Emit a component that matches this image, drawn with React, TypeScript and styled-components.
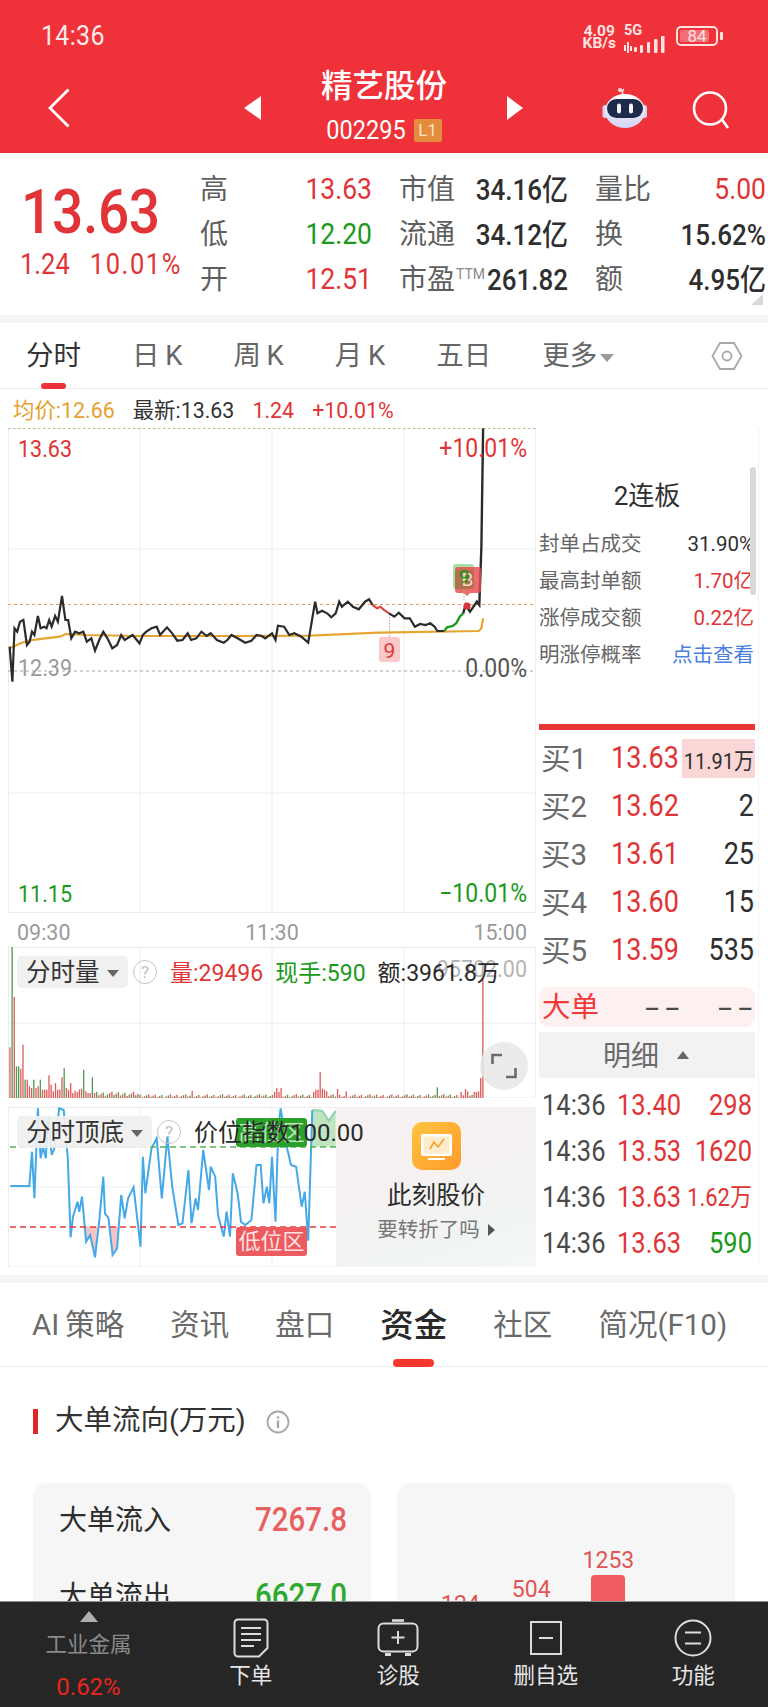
import React from "react";
import styled, { createGlobalStyle, css } from "styled-components";

const FONT = `Roboto, "Noto Sans CJK SC", sans-serif`;
const RED = "#e03436";
const GREEN = "#1b991b";
const DARK = "#2f2f2f";
const GREY = "#666666";

/* The quote font has tall, narrow numerals */
const tallDigits = css`
  display: inline-block;
  transform: scaleY(1.13);
`;

const Global = createGlobalStyle`
  html, body { margin: 0; padding: 0; background: #fff; }
  * { box-sizing: border-box; }
  body { font-family: ${FONT}; }
`;

const Page = styled.div`
  width: 768px;
  height: 1707px;
  overflow: hidden;
  display: flex;
  flex-direction: column;
  background: #fff;
  color: ${DARK};
  line-height: 1;
`;

/* ---------- red header ---------- */
const Header = styled.header`
  flex: none;
  height: 153px;
  background: #ef3239;
  color: #fff;
`;
const StatusBar = styled.div`
  height: 72px;
  display: flex;
  align-items: flex-start;
  padding: 23px 50px 0 41px;
`;
const Clock = styled.span`
  ${tallDigits}
  font-size: 25px;
  line-height: 26px;
  letter-spacing: 0.3px;
  margin-right: auto;
  color: #fdeaea;
`;
const NetSpeed = styled.div`
  display: flex;
  flex-direction: column;
  align-items: center;
  font-size: 15.5px;
  font-weight: 700;
  line-height: 12px;
  margin: 2px 8px 0 0;
  color: #fde2e2;
`;
const SignalBox = styled.div`
  display: flex;
  flex-direction: column;
  font-size: 14.5px;
  font-weight: 700;
  line-height: 11px;
  margin: 2px 10px 0 0;
  color: #fde2e2;
`;
const Battery = styled.div`
  position: relative;
  width: 42px;
  height: 20px;
  margin-top: 3px;
  border: 2px solid #fde2e2;
  border-radius: 5px;
  display: flex;
  align-items: center;
  justify-content: center;
  font-size: 17px;
  color: #fde2e2;
  &::before {
    content: "";
    position: absolute;
    left: 2px;
    top: 2px;
    bottom: 2px;
    width: 29px;
    background: rgba(255, 255, 255, 0.3);
    border-radius: 2px;
  }
  &::after {
    content: "";
    position: absolute;
    right: -7px;
    top: 4px;
    width: 3px;
    height: 8px;
    background: #fde2e2;
    border-radius: 1px;
  }
`;
const BatteryLevel = styled.span`
  position: relative;
`;
const NavBar = styled.div`
  height: 81px;
  display: grid;
  grid-template-columns: 244px 279px 1fr;
  align-items: start;
`;
const BackCell = styled.div`
  padding: 16px 0 0 47px;
  display: flex;
`;
const TitleCell = styled.div`
  display: flex;
  align-items: flex-start;
  justify-content: space-between;
`;
const Arrow = styled.span<{ $dir: "left" | "right" }>`
  width: 0;
  height: 0;
  margin-top: 24px;
  border-top: 12px solid transparent;
  border-bottom: 12px solid transparent;
  ${(p) =>
    p.$dir === "left"
      ? "border-right: 17px solid #fff;"
      : "border-left: 16px solid #fff;"}
`;
const TitleColumn = styled.div`
  display: flex;
  flex-direction: column;
  align-items: center;
  margin-top: -5px;
`;
const StockName = styled.div`
  font-size: 31.5px;
  line-height: 40px;
  font-weight: 500;
  color: #fff;
`;
const CodeRow = styled.div`
  display: flex;
  align-items: center;
  gap: 8px;
  margin-top: 12px;
  font-size: 23.5px;
  color: #fff;
`;
const CodeText = styled.span`
  ${tallDigits}
`;
const LevelBadge = styled.span`
  width: 28px;
  height: 23px;
  background: #e58c3c;
  border-radius: 2px;
  font-size: 17px;
  display: flex;
  align-items: center;
  justify-content: center;
  color: #fbe3c8;
`;
const ActionCell = styled.div`
  display: flex;
  align-items: flex-start;
  padding: 15px 0 0 79px;
  gap: 44px;
`;
const SearchSlot = styled.span`
  display: flex;
  margin-top: 4px;
`;

/* ---------- price summary ---------- */
const Quote = styled.section`
  flex: none;
  height: 162px;
  position: relative;
  display: flex;
  padding: 14px 0 0 20px;
`;
const PriceBlock = styled.div`
  width: 180px;
  flex: none;
  color: ${RED};
`;
const BigPrice = styled.div`
  font-size: 55px;
  font-weight: 500;
  height: 62px;
  line-height: 62px;
  margin: 14px 0 0 1px;
  letter-spacing: -0.3px;
  transform: scaleY(1.12);
`;
const PriceChange = styled.div`
  display: flex;
  gap: 20px;
  margin-top: 6px;
  font-size: 25.5px;
  line-height: 30px;
  white-space: nowrap;
`;
const PriceChangeValue = styled.span<{ $wide?: boolean }>`
  ${tallDigits}
  ${(p) => p.$wide && "letter-spacing: 1.6px;"}
`;
const StatGrid = styled.div`
  display: grid;
  grid-template-columns: 172px 169px 171px;
  column-gap: 27px;
  grid-auto-rows: 45px;
  height: 135px;
`;
const StatCell = styled.div`
  display: flex;
  align-items: center;
  justify-content: space-between;
  white-space: nowrap;
`;
const StatLabel = styled.span`
  font-size: 28px;
  color: #5f5f5f;
`;
const StatValue = styled.span<{ $color?: string }>`
  ${tallDigits}
  font-size: ${(p) => (p.$color ? 26.5 : 26)}px;
  font-weight: ${(p) => (p.$color ? 400 : 500)};
  color: ${(p) => p.$color ?? DARK};
`;
const Ttm = styled.sup`
  font-size: 14px;
  color: #8a8a8a;
  vertical-align: 10px;
  line-height: 0;
  margin-left: 1px;
`;
const CornerMark = styled.span`
  position: absolute;
  right: 5px;
  bottom: 10px;
  width: 0;
  height: 0;
  border-left: 12px solid transparent;
  border-bottom: 11px solid #d8d8d8;
`;
const Band = styled.div`
  flex: none;
  height: 8px;
  background: #f4f4f4;
`;

/* ---------- chart period tabs ---------- */
const PeriodTabs = styled.nav`
  flex: none;
  height: 66px;
  display: flex;
  align-items: center;
  gap: 51px;
  padding: 0 25px 0 26px;
  border-bottom: 1px solid #ececec;
  font-size: 27.5px;
  color: ${GREY};
`;
const PeriodTab = styled.span<{ $active?: boolean }>`
  position: relative;
  white-space: nowrap;
  color: ${(p) => (p.$active ? "#333" : GREY)};
  ${(p) =>
    p.$active &&
    `&::after {
      content: "";
      position: absolute;
      left: 15px;
      bottom: -20px;
      width: 25px;
      height: 6px;
      border-radius: 3px;
      background: #ef3239;
    }`}
`;
const Caret = styled.span<{ $color?: string; $size?: number }>`
  display: inline-block;
  width: 0;
  height: 0;
  margin-left: 3px;
  vertical-align: 3px;
  border-left: ${(p) => p.$size ?? 7}px solid transparent;
  border-right: ${(p) => p.$size ?? 7}px solid transparent;
  border-top: ${(p) => (p.$size ?? 7) + 1}px solid ${(p) => p.$color ?? "#9a9a9a"};
`;
const HexSlot = styled.span`
  margin-left: auto;
  display: flex;
`;
const Legend = styled.div`
  flex: none;
  height: 39px;
  display: flex;
  align-items: center;
  gap: 18px;
  padding: 4px 0 0 13px;
  font-size: 21.4px;
  white-space: nowrap;
`;
const LegendItem = styled.span<{ $color: string }>`
  color: ${(p) => p.$color};
`;

/* ---------- chart + order book ---------- */
const Market = styled.section`
  flex: none;
  height: 847px;
  display: flex;
`;
const ChartColumn = styled.div`
  width: 536px;
  flex: none;
  padding-left: 8px;
  display: flex;
  flex-direction: column;
`;
const ChartPanel = styled.div<{ $h: number; $gap?: number }>`
  position: relative;
  height: ${(p) => p.$h}px;
  margin-top: ${(p) => p.$gap ?? 0}px;
  flex: none;
  & > svg {
    display: block;
  }
`;
const ChartLabel = styled.span<{
  $color: string;
  $left?: number;
  $right?: number;
  $top: number;
  $pct?: boolean;
}>`
  ${tallDigits}
  position: absolute;
  top: ${(p) => p.$top}px;
  ${(p) => (p.$left !== undefined ? `left: ${p.$left}px;` : "")}
  ${(p) => (p.$right !== undefined ? `right: ${p.$right}px;` : "")}
  font-size: ${(p) => (p.$pct ? 23 : 21.5)}px;
  line-height: 24px;
  color: ${(p) => p.$color};
  white-space: nowrap;
`;
const TimeAxis = styled.div`
  flex: none;
  height: 34px;
  display: flex;
  justify-content: space-between;
  align-items: center;
  padding: 5px 9px 0 9px;
  font-size: 21.5px;
  color: #9a9a9a;
`;
const Overlay = styled.div`
  position: absolute;
  left: 9px;
  top: 9px;
  display: flex;
  align-items: center;
  white-space: nowrap;
`;
const IndicatorChip = styled.span<{ $w: number }>`
  width: ${(p) => p.$w}px;
  height: 32px;
  border-radius: 5px;
  background: rgba(240, 240, 240, 0.92);
  display: flex;
  align-items: center;
  justify-content: space-between;
  padding: 2px 9px 0;
  font-size: 24.5px;
  color: #333;
`;
const HelpDot = styled.span`
  width: 24px;
  height: 24px;
  flex: none;
  margin: 0 5px;
  border: 1.5px solid #c4c4c4;
  border-radius: 50%;
  color: #c0c0c0;
  font-size: 17px;
  display: flex;
  align-items: center;
  justify-content: center;
`;
const ReadoutRow = styled.span`
  display: flex;
  gap: 12px;
  margin-left: 8px;
  padding-top: 2px;
  font-size: 23px;
`;
const Readout = styled.span<{ $color: string }>`
  color: ${(p) => p.$color};
`;
const IndexReadout = styled.span`
  margin-left: 8px;
  padding-top: 2px;
  font-size: 24px;
  color: #2a2a2a;
`;
const ExpandButton = styled.span`
  position: absolute;
  left: 472px;
  top: 95px;
  width: 48px;
  height: 48px;
  border-radius: 50%;
  background: rgba(232, 232, 232, 0.85);
  display: flex;
  align-items: center;
  justify-content: center;
`;
const ZoneBadge = styled.span<{ $bg: string; $top: number; $color: string }>`
  position: absolute;
  left: 228px;
  top: ${(p) => p.$top}px;
  width: 71px;
  height: 29px;
  border-radius: 3px;
  background: ${(p) => p.$bg};
  color: ${(p) => p.$color};
  font-size: 22px;
  display: flex;
  align-items: center;
  justify-content: center;
`;
const Promo = styled.aside`
  position: absolute;
  left: 328px;
  right: 0;
  top: 0;
  bottom: 0;
  background: linear-gradient(160deg, #f7f2f2 0%, #f6f1f1 40%, #f0f4f3 75%, #f6f8f8 100%);
  display: flex;
  flex-direction: column;
  align-items: center;
  padding-top: 15px;
`;
const PromoTitle = styled.div`
  margin-top: 11px;
  font-size: 24.5px;
  line-height: 30px;
  color: #2c2c2c;
`;
const PromoSub = styled.div`
  margin-top: 5px;
  font-size: 20.5px;
  line-height: 28px;
  color: #777;
  display: flex;
  align-items: center;
  gap: 8px;
`;
const PlayMark = styled.span`
  width: 0;
  height: 0;
  border-top: 6px solid transparent;
  border-bottom: 6px solid transparent;
  border-left: 7px solid #555;
`;
const SideColumn = styled.div`
  flex: none;
  width: 222px;
  padding: 0 3px;
  margin-right: 10px;
  box-shadow: 1px 0 0 #f3f3f3;
  height: 839px;
`;
const LimitBox = styled.div`
  position: relative;
  height: 296px;
  padding-top: 48px;
`;
const LimitTitle = styled.div`
  height: 40px;
  margin-bottom: 10px;
  display: flex;
  align-items: center;
  justify-content: center;
  font-size: 26px;
`;
const LimitRow = styled.div`
  height: 37px;
  display: flex;
  align-items: center;
  justify-content: space-between;
  padding: 0 1px 0 0;
  white-space: nowrap;
`;
const LimitLabel = styled.span`
  font-size: 20.5px;
  color: ${GREY};
`;
const LimitValue = styled.span<{ $color: string }>`
  font-size: 20.5px;
  color: ${(p) => p.$color};
`;
const ScrollThumb = styled.span`
  position: absolute;
  right: -1px;
  top: 39px;
  width: 6px;
  height: 128px;
  border-radius: 3px;
  background: #d9d9d9;
`;
const RedRule = styled.div`
  height: 6px;
  background: #e83535;
`;
const Book = styled.div`
  margin-top: 4px;
`;
const BookRow = styled.div`
  height: 48px;
  display: grid;
  grid-template-columns: 70px 71px 1fr;
  align-items: center;
  padding-left: 2px;
`;
const BookLabel = styled.span`
  font-size: 29.5px;
  padding-top: 3px;
  color: #6a6a6a;
  white-space: nowrap;
`;
const BookPrice = styled.span`
  ${tallDigits}
  font-size: 27px;
  color: ${RED};
`;
const BookVolume = styled.span<{ $hl?: boolean }>`
  text-align: right;
  font-size: ${(p) => (p.$hl ? 20 : 27)}px;
  color: ${DARK};
  padding-right: 1px;
  white-space: nowrap;
  ${(p) => p.$hl && `background:#fad6d6; height:39px; line-height:44px;`}
`;
const VolumeText = styled.span`
  ${tallDigits}
`;
const BigOrder = styled.div`
  height: 40px;
  margin-top: 13px;
  border-radius: 9px;
  background: #fdf0f1;
  display: grid;
  grid-template-columns: 101px 37px 1fr;
  align-items: center;
  padding: 3px 2px 0 3px;
  color: #ef3a3a;
  font-size: 28.5px;
`;
const Dash = styled.span`
  font-size: 24px;
  font-weight: 500;
  color: #4a4a4a;
  text-align: right;
  letter-spacing: 5px;
  margin-right: -5px;
  white-space: nowrap;
`;
const DetailHead = styled.div`
  height: 46px;
  margin-top: 5px;
  background: #f2f2f2;
  display: flex;
  align-items: center;
  padding: 3px 0 0 64px;
  gap: 18px;
  font-size: 28px;
  color: #6a6a6a;
`;
const UpCaret = styled.span`
  width: 0;
  height: 0;
  margin-top: -3px;
  border-left: 6px solid transparent;
  border-right: 6px solid transparent;
  border-bottom: 8px solid #666;
`;
const Ticks = styled.div`
  margin-top: 3px;
`;
const TickRow = styled.div`
  height: 46px;
  display: grid;
  grid-template-columns: 75px 65px 1fr;
  align-items: center;
  padding: 3px 3px 0 3px;
  font-size: 25.5px;
`;
const TickTime = styled.span`
  ${tallDigits}
  color: #4a4a4a;
`;
const TickPrice = styled.span`
  ${tallDigits}
  color: ${RED};
`;
const TickVolume = styled.span<{ $color: string; $small?: boolean }>`
  text-align: right;
  white-space: nowrap;
  color: ${(p) => p.$color};
  font-size: ${(p) => (p.$small ? 22 : 25.5)}px;
`;

/* ---------- lower content ---------- */
const Lower = styled.section`
  flex: 1;
  min-height: 0;
  overflow: hidden;
`;
const SectionTabs = styled.nav`
  height: 84px;
  display: flex;
  align-items: center;
  gap: 46px;
  padding: 3px 0 0 32px;
  border-bottom: 1.5px solid #ececec;
  font-size: 29.5px;
  color: #6a6a6a;
  white-space: nowrap;
`;
const SectionTab = styled.span<{ $active?: boolean }>`
  position: relative;
  ${(p) =>
    p.$active &&
    `font-size: 33.5px;
     font-weight: 500;
     color: #2a2a2a;
     &::after {
       content: "";
       position: absolute;
       left: 13px;
       bottom: -24px;
       width: 41px;
       height: 8px;
       border-radius: 4px;
       background: #f5372e;
     }`}
`;
const SectionHead = styled.div`
  display: flex;
  align-items: center;
  height: 25px;
  margin: 42px 0 49px 33px;
`;
const HeadMark = styled.span`
  width: 5px;
  height: 25px;
  background: #e1252b;
  margin-right: 17px;
`;
const HeadTitle = styled.span`
  font-size: 28.5px;
  color: #333;
  margin-right: 20px;
  white-space: nowrap;
`;
const Cards = styled.div`
  display: grid;
  grid-template-columns: 338px 338px;
  column-gap: 26px;
  padding-left: 33px;
`;
const Card = styled.div`
  height: 260px;
  border-radius: 14px;
  background: #f6f6f6;
  padding: 20px 24px 0 26px;
`;
const FlowRow = styled.div`
  height: 36px;
  margin-bottom: 40px;
  display: flex;
  justify-content: space-between;
  align-items: center;
`;
const FlowLabel = styled.span`
  font-size: 28px;
  color: #2c2c2c;
`;
const FlowValue = styled.span<{ $color: string }>`
  ${tallDigits}
  font-size: 29.5px;
  font-weight: 500;
  color: ${(p) => p.$color};
`;
const BarCard = styled(Card)`
  padding: 66px 0 0 44px;
  display: flex;
  align-items: flex-start;
  gap: 32px;
`;
const BarColumn = styled.div<{ $offset: number }>`
  margin-top: ${(p) => p.$offset}px;
  display: flex;
  flex-direction: column;
  align-items: center;
  gap: 3px;
  font-size: 23px;
  color: #e25555;
`;
const BarFill = styled.span`
  width: 34px;
  height: 60px;
  border-radius: 4px 4px 0 0;
  background: #ee5c5f;
`;

/* ---------- bottom toolbar ---------- */
const Toolbar = styled.footer`
  flex: none;
  height: 106px;
  background: #262626;
  display: grid;
  grid-template-columns: 177px repeat(4, 147.5px);
  border-top: 1px solid #8e8e8e;
`;
const SectorCell = styled.div`
  display: flex;
  flex-direction: column;
  align-items: center;
  padding-top: 9px;
`;
const SectorCaret = styled.span`
  width: 0;
  height: 0;
  border-left: 9px solid transparent;
  border-right: 9px solid transparent;
  border-bottom: 11px solid #b0b0b0;
`;
const SectorName = styled.span`
  margin-top: 10px;
  font-size: 21.5px;
  line-height: 26px;
  color: #8a8a8a;
`;
const SectorChange = styled.span`
  margin-top: 16px;
  font-size: 24px;
  line-height: 26px;
  color: #e8261d;
`;
const ToolItem = styled.div`
  display: flex;
  flex-direction: column;
  align-items: center;
  padding-top: 16px;
  color: #e6e6e6;
`;
const ToolIcon = styled.span`
  height: 40px;
  display: flex;
  align-items: center;
`;
const ToolLabel = styled.span`
  margin-top: 5px;
  font-size: 21.5px;
  line-height: 26px;
`;

/* ---------- chart data, in a 2.9 x 3 plotting grid ---------- */
const PRICE_A = "28,950 36,1055 42,895 50,905 58,875 68,870 78,945 86,935 93,905 100,915 110,858 118,895 128,890 135,895 143,870 150,890 160,858 168,875 180,798 190,870 198,870 207,925 218,905 230,910 242,905 252,935 265,925 276,962 288,930 300,905 312,925 326,955 340,945 352,915 362,930 385,915 405,940 415,915 425,905 440,895 455,890 465,915 485,892 500,910 515,932 530,930 545,910 555,930 570,925 585,905 600,918 612,910 630,930 650,938 660,930 672,915 690,925 712,938 730,932 745,915 760,918 770,925 790,910 800,930 807,887 825,890 840,915 855,910 875,920 895,938 915,815 922,850 935,842 950,850 962,862 975,850 985,815 993,830 1010,815 1025,830 1042,838 1060,815 1072,808 1082,825";
const PRICE_B = "1082,825 1095,835 1105,830 1115,840 1130,850";
const PRICE_C = "1130,850 1145,860 1158,848 1175,865 1190,865 1205,890 1220,882 1235,885 1250,880 1262,890 1270,903 1290,903";
const PRICE_D = "1290,903 1298,892 1315,888 1325,880 1335,860 1345,850";
const PRICE_E = "1345,850 1352,825 1365,845 1385,815 1392,825 1398,650 1403,295";
const AVERAGE = "28,955 60,940 80,932 130,925 175,920 190,912 250,915 400,918 700,918 900,917 1100,908 1390,903 1398,895 1403,865";
const TREND = "30,858 85,858 93,755 100,895 110,625 118,775 125,740 133,775 140,650 150,765 158,745 172,625 185,630 197,775 205,1012 212,950 225,905 230,935 238,890 250,1025 262,1005 276,1072 288,965 300,830 305,940 315,955 327,1065 340,1045 352,885 362,955 372,895 388,862 408,1040 415,770 422,880 440,745 455,715 470,895 486,710 500,860 518,975 530,970 547,810 556,970 568,895 575,930 590,750 607,870 612,800 625,830 633,945 650,1010 658,935 668,1010 676,820 690,880 700,965 712,975 730,960 745,795 757,795 765,910 775,860 782,910 790,770 800,965 808,690 815,625 835,750 845,795 860,800 876,920 885,875 895,1022 907,630";
const TREND_HIGH = "907,630 935,632 955,662 975,632";

const plot = (pts: string, originY: number) =>
  pts
    .split(" ")
    .map((p) => {
      const [x, y] = p.split(",").map(Number);
      return `${(x / 2.904).toFixed(1)},${(originY + y / 3).toFixed(1)}`;
    })
    .join(" ");

const VOLUME_PEAKS: Record<number, number> = {
  0: 152, 1: 453, 2: 303, 3: 95, 4: 95, 5: 88, 6: 160, 7: 55, 8: 55, 9: 35, 10: 30, 11: 55, 12: 30,
  13: 35, 14: 55, 15: 25, 16: 25, 17: 25, 18: 68, 19: 40, 20: 20, 21: 45, 22: 25, 23: 25, 24: 62,
  25: 90, 26: 30, 27: 25, 28: 45, 29: 15, 30: 22, 31: 18, 32: 25, 33: 28, 34: 85, 35: 20, 36: 15,
  37: 15, 38: 62, 39: 15, 84: 22, 122: 18, 123: 30, 124: 18, 125: 30, 140: 18, 141: 25, 142: 25,
  143: 78, 144: 28, 145: 25, 146: 20, 151: 27, 155: 20, 197: 32, 208: 18, 210: 27, 211: 20,
  214: 18, 215: 18, 216: 20, 217: 60, 218: 360,
};
const GREEN_PEAKS = [1, 3, 4, 7, 11, 14, 25, 34, 38, 197];

const volumeBars = Array.from({ length: 219 }, (_, i) => {
  const noise = ((i * 73 + 19) % 17) / 17;
  const h = VOLUME_PEAKS[i] ?? (i < 60 ? 6 + noise * 14 : 2 + noise * 10);
  const green = GREEN_PEAKS.includes(i) || (!VOLUME_PEAKS[i] && (i * 7 + 3) % 5 >= 3);
  return { x: (27 + i * 6.3) / 2.904, h: h / 3, color: green ? "#4f9a4f" : "#de5a5a" };
});

const GRID = "#ececec";
const VERTICALS = [140, 272, 404];

const VerticalGrid: React.FC<{ y1: number; y2: number }> = ({ y1, y2 }) => (
  <>
    {VERTICALS.map((x) => (
      <line key={x} x1={x} x2={x} y1={y1} y2={y2} stroke={GRID} strokeWidth={1} />
    ))}
    <line x1={8.5} x2={8.5} y1={y1} y2={y2} stroke={GRID} />
    <line x1={535.5} x2={535.5} y1={y1} y2={y2} stroke={GRID} />
  </>
);

const PriceChart = () => (
  <svg width={528} height={485} viewBox="8 428 528 485">
    <VerticalGrid y1={428} y2={913} />
    <line x1={8} x2={536} y1={549} y2={549} stroke={GRID} />
    <line x1={8} x2={536} y1={793} y2={793} stroke={GRID} />
    <line x1={8} x2={536} y1={912.5} y2={912.5} stroke={GRID} />
    <line x1={8} x2={536} y1={428.5} y2={428.5} stroke="#b9b98c" strokeDasharray="2.5 2.5" />
    <line x1={8} x2={536} y1={604.5} y2={604.5} stroke="#ee9a55" strokeDasharray="3 3" />
    <line x1={8} x2={536} y1={671} y2={671} stroke="#a8a8a8" strokeDasharray="3 3" strokeWidth={1.2} />
    <polyline points={plot(AVERAGE, 330)} fill="none" stroke="#e6a531" strokeWidth={2.2} />
    <line x1={389.5} x2={389.5} y1={614} y2={640} stroke="#e58a8a" strokeDasharray="1.5 1.5" />
    <polyline points={plot(PRICE_A, 330)} fill="none" stroke="#2b2b2b" strokeWidth={2.2} />
    <polyline points={plot(PRICE_B, 330)} fill="none" stroke="#d9453f" strokeWidth={2.2} />
    <polyline points={plot(PRICE_C, 330)} fill="none" stroke="#2b2b2b" strokeWidth={2.2} />
    <polyline points={plot(PRICE_D, 330)} fill="none" stroke="#1d9a1d" strokeWidth={2.4} />
    <polyline points={plot(PRICE_E, 330)} fill="none" stroke="#2b2b2b" strokeWidth={2.4} />
    <path d="M379 640a3 3 0 0 1 3-3h6l1.5-1.5 1.5 1.5h6a3 3 0 0 1 3 3v19a3 3 0 0 1-3 3h-15a3 3 0 0 1-3-3z" fill="#f9c8c9" />
    <text x={389.5} y={658} textAnchor="middle" fontSize={21} fill="#e03a3a" fontFamily="Roboto">9</text>
    <rect x={453} y={564} width={21} height={25} rx={3} fill="#a6dea6" />
    <path d="M455 570a3 3 0 0 1 3-3h20a3 3 0 0 1 3 3v20a3 3 0 0 1-3 3h-8l-3 3-3-3h-6a3 3 0 0 1-3-3z" fill="#e64b4e" fillOpacity={0.82} />
    <path d="M455 570h19v16a3 3 0 0 1-3 3h-16z" fill="#8a7a3c" fillOpacity={0.55} />
    <line x1={464} x2={464} y1={590} y2={600} stroke="#7cc47c" strokeDasharray="1.5 1.5" />
    <text x={467.5} y={586} textAnchor="middle" fontSize={19} fill="#f6d9c4" fontFamily="Roboto">B</text>
    <text x={464} y={583} textAnchor="middle" fontSize={19} fill="#159a15" fontFamily="Roboto">9</text>
    <circle cx={467} cy={606} r={3.6} fill="#d8323a" />
  </svg>
);

const VolumeChart = () => (
  <svg width={528} height={151} viewBox="8 947 528 151">
    <VerticalGrid y1={947} y2={1098} />
    <line x1={8} x2={536} y1={947.5} y2={947.5} stroke={GRID} />
    <line x1={8} x2={536} y1={1023} y2={1023} stroke={GRID} />
    <line x1={8} x2={536} y1={1098} y2={1098} stroke={GRID} />
    {volumeBars.map((b, i) => (
      <rect key={i} x={b.x} y={1098 - b.h} width={1.3} height={b.h} fill={b.color} />
    ))}
  </svg>
);

const TrendChart = () => (
  <svg width={528} height={160} viewBox="8 1107 528 160">
    <VerticalGrid y1={1107} y2={1267} />
    <line x1={8} x2={536} y1={1107.5} y2={1107.5} stroke={GRID} />
    <line x1={8} x2={536} y1={1187} y2={1187} stroke={GRID} />
    <line x1={8} x2={536} y1={1267} y2={1267} stroke={GRID} />
    <polygon points={plot("245,980 250,1025 262,1005 276,1072 288,965 290,980", 900)} fill="#f7c4c6" />
    <polygon points={plot("320,980 327,1065 340,1045 345,980", 900)} fill="#f7c4c6" />
    <polygon points={plot("903,740 907,630 935,632 955,662 975,632 975,740", 900)} fill="#bfe6c0" />
    <polyline points={plot(TREND, 900)} fill="none" stroke="#45a9e8" strokeWidth={2} />
    <polyline points={plot(TREND_HIGH, 900)} fill="none" stroke="#8fd0a8" strokeWidth={2} />
    <line x1={10} x2={336} y1={1147} y2={1147} stroke="#58b058" strokeWidth={1.3} strokeDasharray="6 4" />
    <line x1={10} x2={336} y1={1227} y2={1227} stroke="#e8383c" strokeWidth={1.3} strokeDasharray="6 4" />
  </svg>
);

/* ---------- icons ---------- */
const RobotIcon = () => (
  <svg width={46} height={42} viewBox="0 0 46 42">
    <defs>
      <linearGradient id="helmet" x1="0" y1="0" x2="0" y2="1">
        <stop offset="0" stopColor="#ffffff" />
        <stop offset="1" stopColor="#d3d2f5" />
      </linearGradient>
    </defs>
    <path d="M21 8c-1-3-1-5 1-5.5" fill="none" stroke="#f6e6e6" strokeWidth={1.6} />
    <circle cx={18} cy={3} r={2} fill="#f6e6e6" />
    <rect x={0.5} y={18} width={5} height={13} rx={2.5} fill="#d6d3f2" />
    <rect x={40} y={18} width={5} height={13} rx={2.5} fill="#d6d3f2" />
    <ellipse cx={23} cy={24} rx={20} ry={17} fill="url(#helmet)" />
    <rect x={5} y={12} width={36} height={19} rx={9.5} fill="#1e2b4a" />
    <rect x={15} y={16.5} width={4} height={10} rx={2} fill="#f4f4fa" />
    <rect x={27} y={16.5} width={4} height={10} rx={2} fill="#f4f4fa" />
  </svg>
);
const BackIcon = () => (
  <svg width={24} height={40} viewBox="0 0 24 40">
    <path d="M21.5 1.5 3 20l18.5 18.5" fill="none" stroke="#fff" strokeWidth={2.8} />
  </svg>
);
const SearchIcon = () => (
  <svg width={38} height={38} viewBox="0 0 38 38">
    <circle cx={18} cy={17.5} r={16} fill="none" stroke="#fff" strokeWidth={2.6} />
    <path d="M30 28.5 36 37" stroke="#fff" strokeWidth={2.6} />
  </svg>
);
const SignalIcon = () => (
  <svg width={42} height={18} viewBox="0 0 42 18" fill="#fde2e2">
    <rect x={0} y={9} width={2} height={6} />
    <rect x={3} y={6} width={2} height={11} />
    <rect x={6} y={10} width={2} height={5} />
    <rect x={10} y={11} width={3} height={5} rx={1} />
    <rect x={16} y={9} width={3} height={8} rx={1} />
    <rect x={23} y={6} width={3} height={11} rx={1} />
    <rect x={30} y={3} width={3.5} height={14} rx={1} />
    <rect x={37} y={-2} width={3.5} height={19} rx={1} />
  </svg>
);
const HexIcon = () => (
  <svg width={32} height={30} viewBox="0 0 32 30" fill="none" stroke="#a8a8a8" strokeWidth={1.8}>
    <path d="M9 2h14l7.5 13L23 28H9L1.5 15z" />
    <circle cx={16} cy={15} r={4.5} />
  </svg>
);
const ExpandIcon = () => (
  <svg width={26} height={26} viewBox="0 0 26 26" fill="none" stroke="#6b6b6b" strokeWidth={2.6}>
    <path d="M1.5 11V2H11M24.5 15v9H15" />
  </svg>
);
const InfoIcon = () => (
  <svg width={24} height={24} viewBox="0 0 24 24" fill="none" stroke="#a6a6a6" strokeWidth={1.8}>
    <circle cx={12} cy={12} r={10.5} />
    <path d="M12 10.5V18M12 6.2v2.2" strokeWidth={2.4} />
  </svg>
);
const PromoIcon = () => (
  <svg width={49} height={48} viewBox="0 0 49 48">
    <defs>
      <linearGradient id="promoBg" x1="0" y1="0" x2="1" y2="1">
        <stop offset="0" stopColor="#ffc53f" />
        <stop offset="1" stopColor="#ff9a2a" />
      </linearGradient>
    </defs>
    <rect width={49} height={48} rx={10} fill="url(#promoBg)" />
    <rect x={9} y={12} width={31} height={22} rx={2} fill="#fff" />
    <rect x={11.5} y={14.5} width={26} height={17} fill="#fdeccb" />
    <path d="M18 27l4-7 4 5 6-8" fill="none" stroke="#f5a12c" strokeWidth={1.6} />
    <path d="M16 37h17" stroke="#fff" strokeWidth={2} />
  </svg>
);
const OrderIcon = () => (
  <svg width={36} height={40} viewBox="0 0 36 40" fill="none" stroke="#dcdcdc" strokeWidth={2}>
    <path d="M5 1.5h26a3.5 3.5 0 0 1 3.5 3.5v25L26 38.5H5A3.5 3.5 0 0 1 1.5 35V5A3.5 3.5 0 0 1 5 1.5z" />
    <path d="M8 10h20M8 16h20M8 22h20M8 28h13" />
  </svg>
);
const DiagnoseIcon = () => (
  <svg width={42} height={38} viewBox="0 0 42 38" fill="none" stroke="#dcdcdc" strokeWidth={2}>
    <path d="M15 1.5h12" strokeWidth={2.6} />
    <rect x={1.5} y={4.5} width={39} height={28} rx={5} />
    <path d="M8 35.5h6M28 35.5h6" strokeWidth={3} />
    <path d="M21 12v13M14.5 18.5h13" />
  </svg>
);
const RemoveIcon = () => (
  <svg width={32} height={34} viewBox="0 0 32 34" fill="none" stroke="#dcdcdc" strokeWidth={2}>
    <rect x={1} y={1} width={30} height={32} />
    <path d="M9 17h14" />
  </svg>
);
const MenuIcon = () => (
  <svg width={38} height={38} viewBox="0 0 38 38" fill="none" stroke="#dcdcdc" strokeWidth={2}>
    <circle cx={19} cy={19} r={17.5} />
    <path d="M11 13.5h16M11 24.5h16" />
  </svg>
);

const BOOK = [
  { label: "买1", price: "13.63", volume: "11.91万", hl: true },
  { label: "买2", price: "13.62", volume: "2" },
  { label: "买3", price: "13.61", volume: "25" },
  { label: "买4", price: "13.60", volume: "15" },
  { label: "买5", price: "13.59", volume: "535" },
];
const TICKS = [
  { price: "13.40", volume: "298", color: RED },
  { price: "13.53", volume: "1620", color: RED },
  { price: "13.63", volume: "1.62万", color: RED, small: true },
  { price: "13.63", volume: "590", color: GREEN },
];

export default function App() {
  return (
    <Page>
      <Global />
      <Header>
        <StatusBar>
          <Clock>14:36</Clock>
          <NetSpeed>
            <span>4.09</span>
            <span>KB/s</span>
          </NetSpeed>
          <SignalBox>
            <span>5G</span>
            <SignalIcon />
          </SignalBox>
          <Battery>
            <BatteryLevel>84</BatteryLevel>
          </Battery>
        </StatusBar>
        <NavBar>
          <BackCell>
            <BackIcon />
          </BackCell>
          <TitleCell>
            <Arrow $dir="left" />
            <TitleColumn>
              <StockName>精艺股份</StockName>
              <CodeRow>
                <CodeText>002295</CodeText>
                <LevelBadge>L1</LevelBadge>
              </CodeRow>
            </TitleColumn>
            <Arrow $dir="right" />
          </TitleCell>
          <ActionCell>
            <RobotIcon />
            <SearchSlot><SearchIcon /></SearchSlot>
          </ActionCell>
        </NavBar>
      </Header>

      <Quote>
        <PriceBlock>
          <BigPrice>13.63</BigPrice>
          <PriceChange>
            <PriceChangeValue>1.24</PriceChangeValue>
            <PriceChangeValue $wide>10.01%</PriceChangeValue>
          </PriceChange>
        </PriceBlock>
        <StatGrid>
          <StatCell><StatLabel>高</StatLabel><StatValue $color={RED}>13.63</StatValue></StatCell>
          <StatCell><StatLabel>市值</StatLabel><StatValue>34.16亿</StatValue></StatCell>
          <StatCell><StatLabel>量比</StatLabel><StatValue $color={RED}>5.00</StatValue></StatCell>
          <StatCell><StatLabel>低</StatLabel><StatValue $color={GREEN}>12.20</StatValue></StatCell>
          <StatCell><StatLabel>流通</StatLabel><StatValue>34.12亿</StatValue></StatCell>
          <StatCell><StatLabel>换</StatLabel><StatValue>15.62%</StatValue></StatCell>
          <StatCell><StatLabel>开</StatLabel><StatValue $color={RED}>12.51</StatValue></StatCell>
          <StatCell><StatLabel>市盈<Ttm>TTM</Ttm></StatLabel><StatValue>261.82</StatValue></StatCell>
          <StatCell><StatLabel>额</StatLabel><StatValue>4.95亿</StatValue></StatCell>
        </StatGrid>
        <CornerMark />
      </Quote>
      <Band />

      <PeriodTabs>
        <PeriodTab $active>分时</PeriodTab>
        <PeriodTab>日{"\u2009"}K</PeriodTab>
        <PeriodTab>周{"\u2009"}K</PeriodTab>
        <PeriodTab>月{"\u2009"}K</PeriodTab>
        <PeriodTab>五日</PeriodTab>
        <PeriodTab>更多<Caret /></PeriodTab>
        <HexSlot><HexIcon /></HexSlot>
      </PeriodTabs>
      <Legend>
        <LegendItem $color="#e5a02e">均价:12.66</LegendItem>
        <LegendItem $color="#333">最新:13.63</LegendItem>
        <LegendItem $color={RED}>1.24</LegendItem>
        <LegendItem $color={RED}>+10.01%</LegendItem>
      </Legend>

      <Market>
        <ChartColumn>
          <ChartPanel $h={485}>
            <PriceChart />
            <ChartLabel $color={RED} $left={10} $top={9}>13.63</ChartLabel>
            <ChartLabel $color={RED} $right={9} $top={9} $pct>+10.01%</ChartLabel>
            <ChartLabel $color="#9a9a9a" $left={10} $top={228}>12.39</ChartLabel>
            <ChartLabel $color="#555" $right={9} $top={229} $pct>0.00%</ChartLabel>
            <ChartLabel $color={GREEN} $left={10} $top={454}>11.15</ChartLabel>
            <ChartLabel $color={GREEN} $right={9} $top={454} $pct>−10.01%</ChartLabel>
          </ChartPanel>
          <TimeAxis>
            <span>09:30</span>
            <span>11:30</span>
            <span>15:00</span>
          </TimeAxis>
          <ChartPanel $h={151}>
            <VolumeChart />
            <ChartLabel $color="#b4b4b4" $right={9} $top={10}>95702.00</ChartLabel>
            <Overlay>
              <IndicatorChip $w={111}>分时量<Caret $color="#666" $size={6} /></IndicatorChip>
              <HelpDot>?</HelpDot>
              <ReadoutRow>
                <Readout $color={RED}>量:29496</Readout>
                <Readout $color={GREEN}>现手:590</Readout>
                <Readout $color="#2a2a2a">额:3961.8万</Readout>
              </ReadoutRow>
            </Overlay>
            <ExpandButton><ExpandIcon /></ExpandButton>
          </ChartPanel>
          <ChartPanel $h={160} $gap={9}>
            <TrendChart />
            <ZoneBadge $bg="#2ba02b" $color="#bfe6bf" $top={11}>高位区</ZoneBadge>
            <ZoneBadge $bg="#ec5b5f" $color="#fde3e3" $top={120}>低位区</ZoneBadge>
            <Promo>
              <PromoIcon />
              <PromoTitle>此刻股价</PromoTitle>
              <PromoSub>要转折了吗<PlayMark /></PromoSub>
            </Promo>
            <Overlay>
              <IndicatorChip $w={135}>分时顶底<Caret $color="#666" $size={6} /></IndicatorChip>
              <HelpDot>?</HelpDot>
              <IndexReadout>价位指数100.00</IndexReadout>
            </Overlay>
          </ChartPanel>
        </ChartColumn>

        <SideColumn>
          <LimitBox>
            <ScrollThumb />
            <LimitTitle>2连板</LimitTitle>
            <LimitRow><LimitLabel>封单占成交</LimitLabel><LimitValue $color={DARK}>31.90%</LimitValue></LimitRow>
            <LimitRow><LimitLabel>最高封单额</LimitLabel><LimitValue $color={RED}>1.70亿</LimitValue></LimitRow>
            <LimitRow><LimitLabel>涨停成交额</LimitLabel><LimitValue $color={RED}>0.22亿</LimitValue></LimitRow>
            <LimitRow><LimitLabel>明涨停概率</LimitLabel><LimitValue $color="#4a7fe0">点击查看</LimitValue></LimitRow>
          </LimitBox>
          <RedRule />
          <Book>
            {BOOK.map((r) => (
              <BookRow key={r.label}>
                <BookLabel>{r.label}</BookLabel>
                <BookPrice>{r.price}</BookPrice>
                <BookVolume $hl={r.hl}><VolumeText>{r.volume}</VolumeText></BookVolume>
              </BookRow>
            ))}
          </Book>
          <BigOrder>
            <span>大单</span>
            <Dash>––</Dash>
            <Dash>––</Dash>
          </BigOrder>
          <DetailHead>明细<UpCaret /></DetailHead>
          <Ticks>
            {TICKS.map((t, i) => (
              <TickRow key={i}>
                <TickTime>14:36</TickTime>
                <TickPrice>{t.price}</TickPrice>
                <TickVolume $color={t.color} $small={t.small}><VolumeText>{t.volume}</VolumeText></TickVolume>
              </TickRow>
            ))}
          </Ticks>
        </SideColumn>
      </Market>
      <Band />

      <Lower>
        <SectionTabs>
          <SectionTab>AI{"\u2009"}策略</SectionTab>
          <SectionTab>资讯</SectionTab>
          <SectionTab>盘口</SectionTab>
          <SectionTab $active>资金</SectionTab>
          <SectionTab>社区</SectionTab>
          <SectionTab>简况(F10)</SectionTab>
        </SectionTabs>
        <SectionHead>
          <HeadMark />
          <HeadTitle>大单流向(万元)</HeadTitle>
          <InfoIcon />
        </SectionHead>
        <Cards>
          <Card>
            <FlowRow><FlowLabel>大单流入</FlowLabel><FlowValue $color="#e85f5f">7267.8</FlowValue></FlowRow>
            <FlowRow><FlowLabel>大单流出</FlowLabel><FlowValue $color="#2fa82f">6627.0</FlowValue></FlowRow>
          </Card>
          <BarCard>
            <BarColumn $offset={44}>124</BarColumn>
            <BarColumn $offset={29}>504</BarColumn>
            <BarColumn $offset={0}>1253<BarFill /></BarColumn>
          </BarCard>
        </Cards>
      </Lower>

      <Toolbar>
        <SectorCell>
          <SectorCaret />
          <SectorName>工业金属</SectorName>
          <SectorChange>0.62%</SectorChange>
        </SectorCell>
        <ToolItem><ToolIcon><OrderIcon /></ToolIcon><ToolLabel>下单</ToolLabel></ToolItem>
        <ToolItem><ToolIcon><DiagnoseIcon /></ToolIcon><ToolLabel>诊股</ToolLabel></ToolItem>
        <ToolItem><ToolIcon><RemoveIcon /></ToolIcon><ToolLabel>删自选</ToolLabel></ToolItem>
        <ToolItem><ToolIcon><MenuIcon /></ToolIcon><ToolLabel>功能</ToolLabel></ToolItem>
      </Toolbar>
    </Page>
  );
}
